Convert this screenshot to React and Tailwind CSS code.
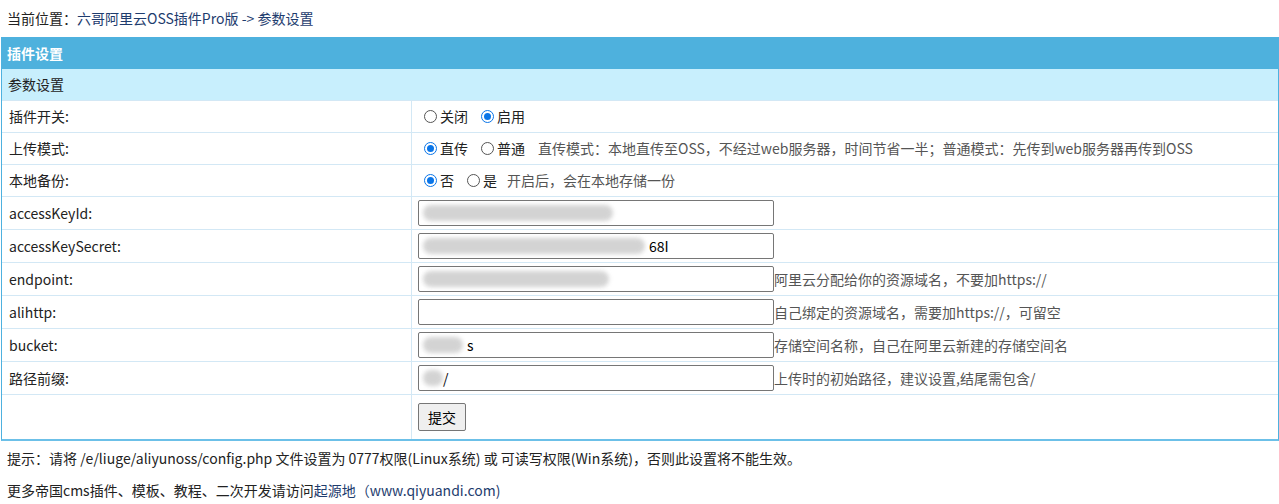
export default function App() {
  const F = { fontFamily: '"Noto Sans CJK SC", "Noto Sans", sans-serif' };
  const Radio = ({ on }) => (
    <span className={`inline-block w-[13px] h-[13px] rounded-full border mr-[3px] align-[-1px] ${on ? "border-[#0a75e8] bg-white" : "border-[#555]"} relative`}>
      {on && <span className="absolute inset-[2px] rounded-full bg-[#0a75e8]" />}
    </span>
  );
  const Blur = ({ w, l = 4 }) => (
    <span className="absolute top-[4px] h-[16px] rounded-full bg-[#c9c9c9] blur-[2px] opacity-80" style={{ left: l, width: w }} />
  );
  const Input = ({ blur, text, pre = 0 }) => (
    <div className="relative w-[356px] h-[26px] border border-[#767676] rounded-[2px] bg-white text-[14px] text-black flex items-center pl-[4px] shrink-0 overflow-hidden">
      <span style={{ marginLeft: pre }}>{text}</span>
      {blur && <Blur w={blur} />}
    </div>
  );
  const rows = [
    ["accessKeyId:", <Input blur={190} />, ""],
    ["accessKeySecret:", <Input blur={222} text="68I" pre={226} />, ""],
    ["endpoint:", <Input blur={186} />, "阿里云分配给你的资源域名，不要加https://"],
    ["alihttp:", <Input />, "自己绑定的资源域名，需要加https://，可留空"],
    ["bucket:", <Input blur={40} text="s" pre={44} />, "存储空间名称，自己在阿里云新建的存储空间名"],
    ["路径前缀:", <Input blur={20} text="/" pre={20} />, "上传时的初始路径，建议设置,结尾需包含/"],
  ];
  const cellL = "w-[410px] shrink-0 pl-[7px] flex items-center border-r border-[#d3e8f5]";
  return (
    <div style={F} className="w-[1279px] h-[504px] bg-white text-[14px] text-[#333] overflow-hidden">
      <div className="h-[37px] pl-[7px] flex items-center">
        <span className="text-[#222]">当前位置：</span>
        <span className="text-[#1e3c6e]">六哥阿里云OSS插件Pro版 -&gt; 参数设置</span>
      </div>
      <div className="ml-[1px] border border-[#4eb1df] border-b-[2px] border-b-[#6cc0e8]">
        <div className="h-[31px] bg-[#4eb1dd] text-white font-bold pl-[5px] flex items-center">插件设置</div>
        <div className="h-[32px] bg-[#c8effd] text-[#222] pl-[6px] flex items-center border-b border-[#d3e8f5]">参数设置</div>
        {[
          ["插件开关:", <><Radio />关闭<span className="w-[13px]" /><Radio on />启用</>],
          ["上传模式:", <><Radio on />直传<span className="w-[13px]" /><Radio />普通<span className="ml-[13px] text-[#555]">直传模式：本地直传至OSS，不经过web服务器，时间节省一半；普通模式：先传到web服务器再传到OSS</span></>],
          ["本地备份:", <><Radio on />否<span className="w-[13px]" /><Radio />是<span className="ml-[10px] text-[#555]">开启后，会在本地存储一份</span></>],
        ].map(([l, r], i) => (
          <div key={i} className="h-[32px] flex border-b border-[#d3e8f5] text-[#222]">
            <div className={cellL}>{l}</div>
            <div className="pl-[12px] flex items-center">{r}</div>
          </div>
        ))}
        {rows.map(([l, inp, hint], i) => (
          <div key={i} className="h-[33px] flex border-b border-[#d3e8f5]">
            <div className={cellL + " text-[#222]"}>{l}</div>
            <div className="pl-[6px] flex items-center">
              {inp}
              <span className="text-[#555]">{hint}</span>
            </div>
          </div>
        ))}
        <div className="h-[44px] flex">
          <div className={cellL} />
          <div className="pl-[6px] flex items-center">
            <button className="h-[28px] px-[9px] border border-[#767676] rounded-[2px] bg-[#efefef] text-[14px] text-black">提交</button>
          </div>
        </div>
      </div>
      <div className="h-[34px] pl-[7px] flex items-center text-[#222]">提示：请将 /e/liuge/aliyunoss/config.php 文件设置为 0777权限(Linux系统) 或 可读写权限(Win系统)，否则此设置将不能生效。</div>
      <div className="h-[30px] pl-[7px] flex items-center text-[#222]">更多帝国cms插件、模板、教程、二次开发请访问<span className="text-[#1e3c6e]">起源地（www.qiyuandi.com)</span></div>
    </div>
  );
}
